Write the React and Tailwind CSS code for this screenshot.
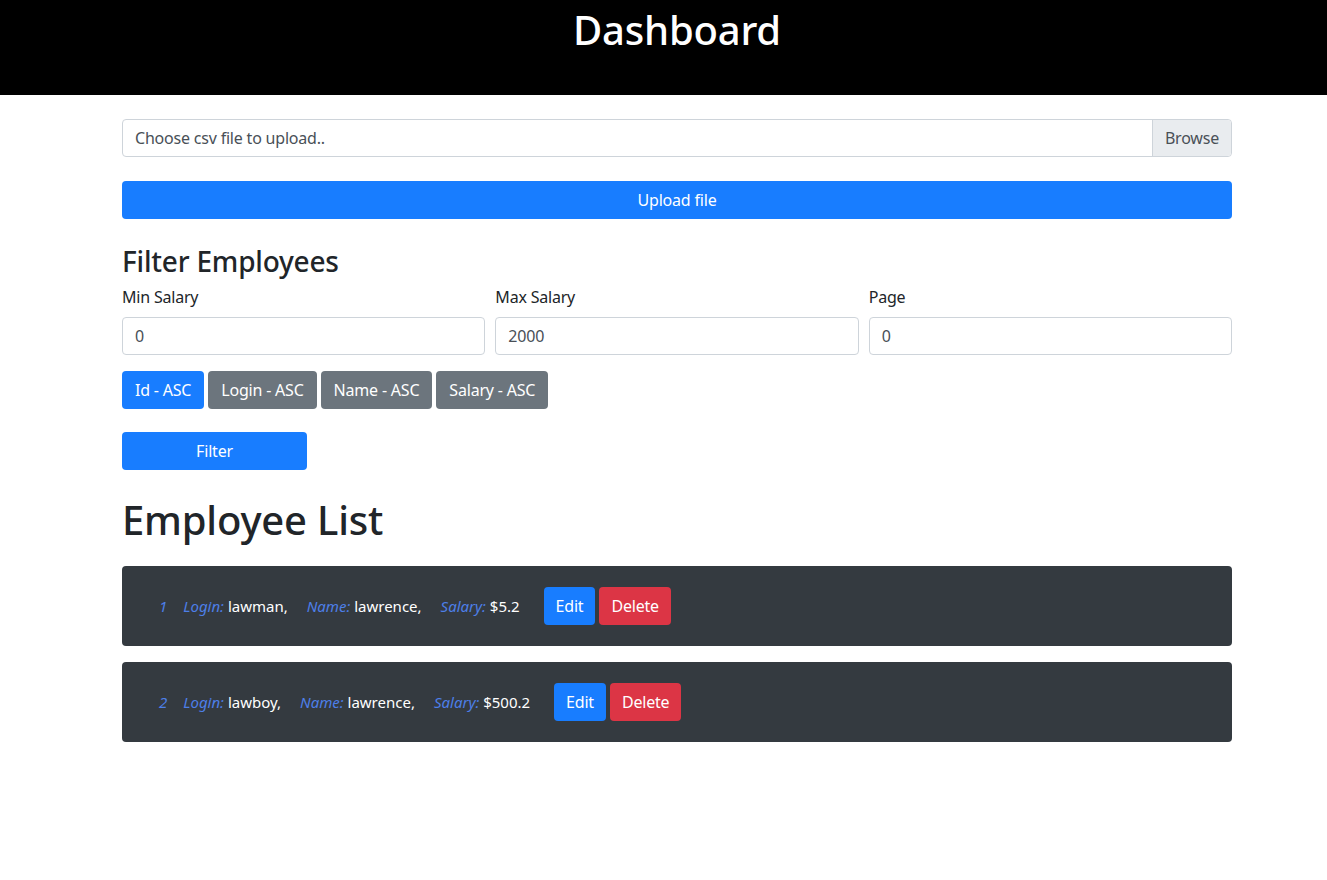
import { useState } from 'react';

const employees = [
  { id: 1, login: 'lawman', name: 'lawrence', salary: '$5.2' },
  { id: 2, login: 'lawboy', name: 'lawrence', salary: '$500.2' },
];

const sorts = ['Id', 'Login', 'Name', 'Salary'];

function App() {
  const [minSalary, setMinSalary] = useState('0');
  const [maxSalary, setMaxSalary] = useState('2000');
  const [page, setPage] = useState('0');
  const [activeSort, setActiveSort] = useState('Id');

  return (
    <div className="min-h-screen bg-white text-[#212529] font-['Noto_Sans','Open_Sans',sans-serif] tracking-[-0.2px]">
      <header className="h-[95px] bg-black">
        <div className="ml-[122px] w-[1110px]">
          <h1 className="pt-[6px] text-center text-[40px] leading-[48px] font-medium text-white">Dashboard</h1>
        </div>
      </header>

      <main className="ml-[122px] w-[1110px]">
        <div className="mt-6 flex h-[38px] rounded border border-[#ced4da] text-base">
          <div className="flex flex-1 items-center px-3 text-[#495057]">Choose csv file to upload..</div>
          <div className="flex items-center border-l border-[#ced4da] bg-[#e9ecef] px-3 text-[#495057] rounded-r">Browse</div>
        </div>

        <button className="mt-6 h-[38px] w-full rounded bg-[#187dff] text-white">Upload file</button>

        <h3 className="mt-6 mb-2 pt-[2px] text-[28px] leading-[32px] font-medium">Filter Employees</h3>
        <div className="grid grid-cols-3 gap-[10px]">
          {[
            ['Min Salary', minSalary, setMinSalary],
            ['Max Salary', maxSalary, setMaxSalary],
            ['Page', page, setPage],
          ].map(([label, value, setter]) => (
            <div key={label}>
              <label className="mb-2 block leading-6">{label}</label>
              <input
                value={value}
                onChange={(e) => setter(e.target.value)}
                className="h-[38px] w-full rounded border border-[#ced4da] px-3 text-[#495057] outline-none"
              />
            </div>
          ))}
        </div>

        <div className="mt-4 flex gap-1">
          {sorts.map((s) => (
            <button
              key={s}
              onClick={() => setActiveSort(s)}
              className={
                'h-[38px] rounded px-[13px] text-white ' +
                (activeSort === s ? 'bg-[#187dff]' : 'bg-[#6c757d]')
              }
            >
              {s} - ASC
            </button>
          ))}
        </div>

        <button className="mt-[23px] h-[38px] w-[185px] rounded bg-[#187dff] text-white">Filter</button>

        <h1 className="mt-[26px] mb-[22px] text-[40px] leading-[48px] font-medium">Employee List</h1>

        <div className="flex flex-col gap-4">
          {employees.map((emp) => (
            <div key={emp.id} className="flex h-20 items-center rounded bg-[#343a40] pl-[37px] text-[15px] tracking-normal">
              <span className="italic text-[#4d7fe8]">{emp.id}</span>
              <span className="ml-4">
                <span className="italic text-[#4d7fe8]">Login:</span> <span className="text-white">{emp.login},</span>
              </span>
              <span className="ml-[19px]">
                <span className="italic text-[#4d7fe8]">Name:</span> <span className="text-white">{emp.name},</span>
              </span>
              <span className="ml-[19px]">
                <span className="italic text-[#4d7fe8]">Salary:</span> <span className="text-white">{emp.salary}</span>
              </span>
              <button className="ml-6 h-[38px] rounded bg-[#187dff] px-3 text-base tracking-[-0.2px] text-white">Edit</button>
              <button className="ml-1 h-[38px] rounded bg-[#dc3545] px-3 text-base tracking-[-0.2px] text-white">Delete</button>
            </div>
          ))}
        </div>
      </main>
    </div>
  );
}

export default App;
